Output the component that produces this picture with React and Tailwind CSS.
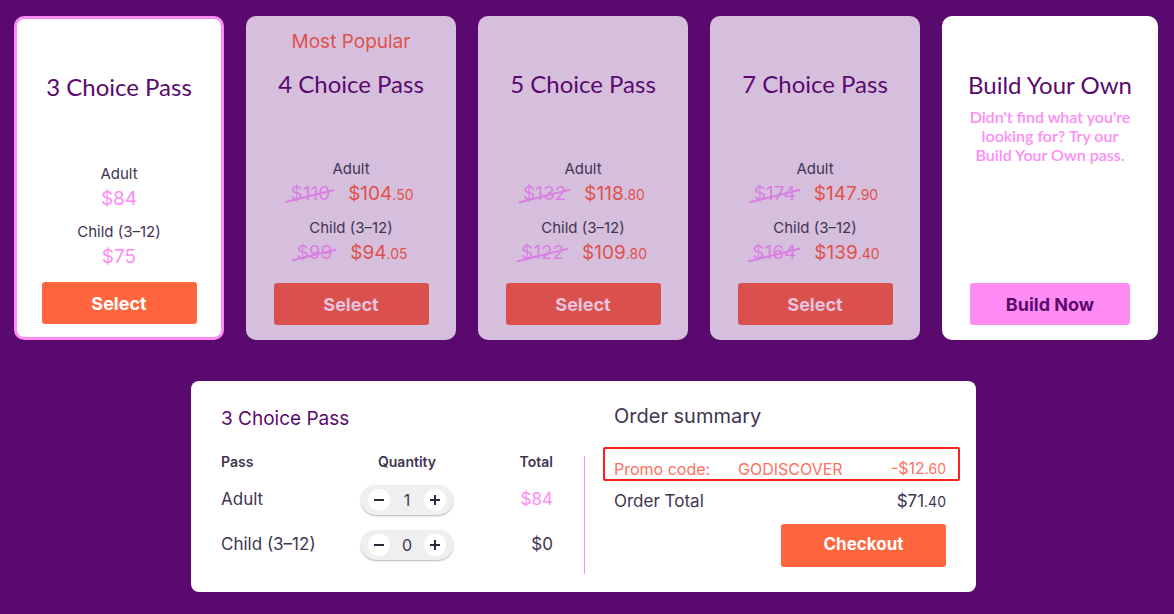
import React from 'react';

const body = { fontFamily: 'Inter, "Noto Sans", sans-serif' };
const head = { fontFamily: 'Lato, "Open Sans", sans-serif' };

const passes = [
  { id: 3, title: '3 Choice Pass', adult: ['84'], child: ['75'], selected: true },
  { id: 4, title: '4 Choice Pass', popular: true, adult: ['110', '104', '.50'], child: ['99', '94', '.05'] },
  { id: 5, title: '5 Choice Pass', adult: ['132', '118', '.80'], child: ['122', '109', '.80'] },
  { id: 7, title: '7 Choice Pass', adult: ['174', '147', '.90'], child: ['164', '139', '.40'] },
];

const Price = ({ p, selected }) => {
  if (selected) {
    return <div className="text-[19px] leading-[26px] text-[#ff8cf5]">${p[0]}</div>;
  }
  return (
    <div className="flex items-baseline justify-center gap-[18px] leading-[26px] pl-[2px]">
      <span className="relative text-[19px] text-[#d97fe3]">
        ${p[0]}
        <span className="absolute left-[-5px] right-[-5px] top-[14px] h-[2px] bg-[#d97fe3] -rotate-[14deg]" />
      </span>
      <span className="text-[19px] text-[#e0514d]">
        ${p[1]}
        <span className="text-[14px]">{p[2]}</span>
      </span>
    </div>
  );
};

const PassCard = ({ pass }) => {
  const sel = pass.selected;
  return (
    <div
      className={
        'w-[210px] h-[324px] rounded-[10px] flex flex-col items-center ' +
        (sel ? 'bg-white border-[3px] border-[#ff8cf5] pt-[14px] pb-[13px]' : 'bg-[#d6bfdc] pt-[14px] pb-[15px]')
      }
    >
      <div className="h-[24px] leading-[24px] text-[19px] text-[#e0514d]" style={body}>
        {pass.popular ? 'Most Popular' : ''}
      </div>
      <div className="mt-[15px] leading-[30px] text-[24px] text-[#5a0a6e]" style={head}>
        {pass.title}
      </div>
      <div className="flex-1" />
      <div className="flex flex-col items-center" style={body}>
        <div className="text-[15px] leading-[20px] text-[#3f3552]">Adult</div>
        <div className="mt-[2px]">
          <Price p={pass.adult} selected={sel} />
        </div>
        <div className="mt-[10px] text-[15px] leading-[20px] text-[#3f3552]">Child (3–12)</div>
        <div className="mt-[2px]">
          <Price p={pass.child} selected={sel} />
        </div>
      </div>
      <button
        className={
          'w-[155px] h-[42px] rounded-[3px] text-[18px] font-bold ' +
          (sel ? 'mt-[12px] bg-[#ff663d] text-white' : 'mt-[16px] bg-[#d9504d] text-[#ecc3de]')
        }
        style={body}
      >
        Select
      </button>
    </div>
  );
};

const Stepper = ({ value }) => (
  <div className="w-[92px] h-[30px] rounded-full bg-[#efefef] shadow-[0_1px_2px_rgba(0,0,0,0.3)] flex items-center justify-between px-[7px]">
    <span className="w-[22px] h-[22px] rounded-full bg-white flex items-center justify-center">
      <span className="w-[10px] h-[2px] bg-[#2b2b3a]" />
    </span>
    <span className="text-[16px] text-[#3f3552]">{value}</span>
    <span className="w-[22px] h-[22px] rounded-full bg-white flex items-center justify-center relative">
      <span className="w-[10px] h-[2px] bg-[#2b2b3a]" />
      <span className="absolute w-[2px] h-[10px] bg-[#2b2b3a]" />
    </span>
  </div>
);

export default function App() {
  return (
    <div className="w-[1174px] h-[614px] bg-[#5a0a6e] overflow-hidden" style={body}>
      <div className="flex gap-[22px] pl-[14px] pt-[16px]">
        {passes.map((p) => (
          <PassCard key={p.id} pass={p} />
        ))}
        <div className="w-[216px] h-[324px] rounded-[10px] bg-white flex flex-col items-center pt-[54px] pb-[15px]">
          <div className="leading-[30px] text-[24px] text-[#5a0a6e]" style={head}>
            Build Your Own
          </div>
          <div className="mt-[7px] text-center text-[16px] leading-[19px] font-semibold text-[#ff8cf5]" style={head}>
            Didn't find what you're
            <br />
            looking for? Try our
            <br />
            Build Your Own pass.
          </div>
          <div className="flex-1" />
          <button className="w-[160px] h-[42px] rounded-[3px] bg-[#ff8cf5] text-[#5a0a6e] text-[18px] font-bold">
            Build Now
          </button>
        </div>
      </div>

      <div className="ml-[191px] mt-[41px] w-[785px] h-[211px] bg-white rounded-[8px] flex px-[30px]">
        <div className="w-[332px] pt-[26px]">
          <div className="text-[19px] leading-[24px] text-[#5a0a6e]">3 Choice Pass</div>
          <div className="grid grid-cols-[140px_92px_1fr] items-center mt-[21px] text-[#3f3552]">
            <div className="text-[14px] font-semibold leading-[20px]">Pass</div>
            <div className="text-[14px] font-semibold leading-[20px] text-center">Quantity</div>
            <div className="text-[14px] font-semibold leading-[20px] text-right">Total</div>

            <div className="text-[17px] mt-[13px]">Adult</div>
            <div className="mt-[13px]">
              <Stepper value="1" />
            </div>
            <div className="text-[17px] text-right text-[#ff8cf5] mt-[13px]">$84</div>

            <div className="text-[17px] mt-[15px]">Child (3–12)</div>
            <div className="mt-[15px]">
              <Stepper value="0" />
            </div>
            <div className="text-[17px] text-right mt-[15px]">$0</div>
          </div>
        </div>
        <div className="ml-[31px] mt-[75px] w-px h-[118px] bg-[#ff8cf5]" />
        <div className="ml-[29px] flex-1 pt-[23px]">
          <div className="text-[20px] leading-[24px] text-[#3f3552]">Order summary</div>
          <div className="mt-[19px] -ml-[11px] -mr-[14px] h-[34px] border-2 border-[#ff1f1f] rounded-[2px] flex items-end pl-[9px] pr-[12px] text-[16px] leading-[20px] text-[#ff6f5e]">
            <span className="w-[124px]">Promo code:</span>
            <span className="flex-1">GODISCOVER</span>
            <span>
              -$12<span className="text-[14px]">.60</span>
            </span>
          </div>
          <div className="mt-[8px] flex justify-between text-[17px] text-[#3f3552]">
            <span>Order Total</span>
            <span>
              $71<span className="text-[14px]">.40</span>
            </span>
          </div>
          <div className="flex justify-end mt-[9px]">
            <button className="w-[165px] h-[43px] rounded-[3px] bg-[#ff663d] text-white text-[17px] font-bold">
              Checkout
            </button>
          </div>
        </div>
      </div>
    </div>
  );
}
